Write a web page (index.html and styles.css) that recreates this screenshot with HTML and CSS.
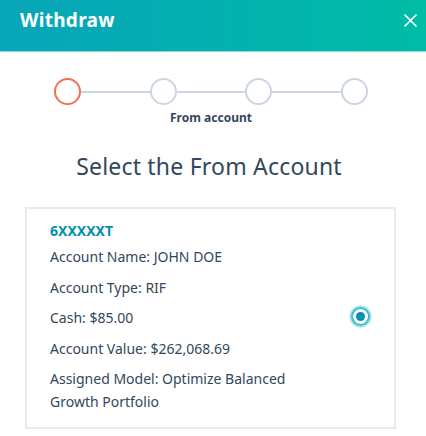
FILE: index.html
```html
<!DOCTYPE html>
<html lang="en">
<head>
  <meta charset="UTF-8">
  <title>Withdraw</title>
  <link rel="stylesheet" href="styles.css">
</head>
<body>
  <div class="modal">
    <div class="modal-header">
      <h1>Withdraw</h1>
      <button class="close" aria-label="Close">
        <svg width="13" height="13" viewBox="0 0 13 13"><path d="M1 1L12 12M12 1L1 12" stroke="#fff" stroke-width="1.7" stroke-linecap="round"/></svg>
      </button>
    </div>

    <div class="stepper">
      <div class="steps">
        <span class="dot active"></span>
        <span class="line"></span>
        <span class="dot"></span>
        <span class="line"></span>
        <span class="dot"></span>
        <span class="line"></span>
        <span class="dot"></span>
      </div>
      <div class="step-label">From account</div>
    </div>

    <h2 class="title">Select the From Account</h2>

    <div class="card">
      <div class="info">
        <div class="acct">6XXXXXT</div>
        <p>Account Name: JOHN DOE</p>
        <p>Account Type: RIF</p>
        <p>Cash: $85.00</p>
        <p>Account Value: $262,068.69</p>
        <p>Assigned Model: Optimize Balanced Growth Portfolio</p>
      </div>
      <span class="radio"><span></span></span>
    </div>
  </div>
</body>
</html>
```

FILE: styles.css
```css
body { margin: 0; font-family: "Noto Sans", sans-serif; color: #33475b; background: #fff; }
.modal { width: 426px; }
.modal-header {
  height: 52px; display: flex; align-items: flex-start; justify-content: space-between;
  padding: 7px 9px 0 20px; box-sizing: border-box;
  background: linear-gradient(90deg, #07a5b9, #00bca6);
  border-bottom: 1px solid #8adcd4;
}
.modal-header h1 { margin: 0; font-size: 19px; line-height: 26px; font-weight: 700; color: #fff; letter-spacing: 0.3px; }
.close { background: none; border: 0; padding: 0; margin-top: 7px; cursor: pointer; display: flex; }

.stepper { width: 314px; margin: 26px 0 0 54px; }
.steps { display: flex; align-items: center; }
.dot { width: 23px; height: 23px; border: 2px solid #cbd6e2; border-radius: 50%; flex: none; }
.dot.active { border-color: #f2704f; }
.line { flex: 1; height: 2px; background: #cbd6e2; }
.step-label { text-align: center; font-size: 12px; font-weight: 700; line-height: 16px; margin-top: 5px; }

.title { margin: 25px 0 0; text-align: center; font-size: 23px; font-weight: 400; line-height: 30px; padding-right: 8px; letter-spacing: 0.2px; }

.card {
  margin: 26px 30px 0 25px; border: 2px solid #e5ebf2; padding: 11px 24px 14px 23px;
  display: flex; align-items: center; justify-content: space-between;
}
.info { width: 250px; }
.acct { color: #0091ae; font-weight: 700; font-size: 14px; line-height: 22px; margin-bottom: 3px; }
.info p { margin: 0 0 7.5px; font-size: 14px; line-height: 23px; }
.info p:last-child { margin-bottom: 0; }
.radio {
  width: 15px; height: 15px; border: 2px solid #36bdd3; border-radius: 50%;
  box-shadow: 0 0 0 1.5px #a6e3ec; display: flex; align-items: center; justify-content: center;
}
.radio span { width: 9px; height: 9px; border-radius: 50%; background: #0091ae; }
```
